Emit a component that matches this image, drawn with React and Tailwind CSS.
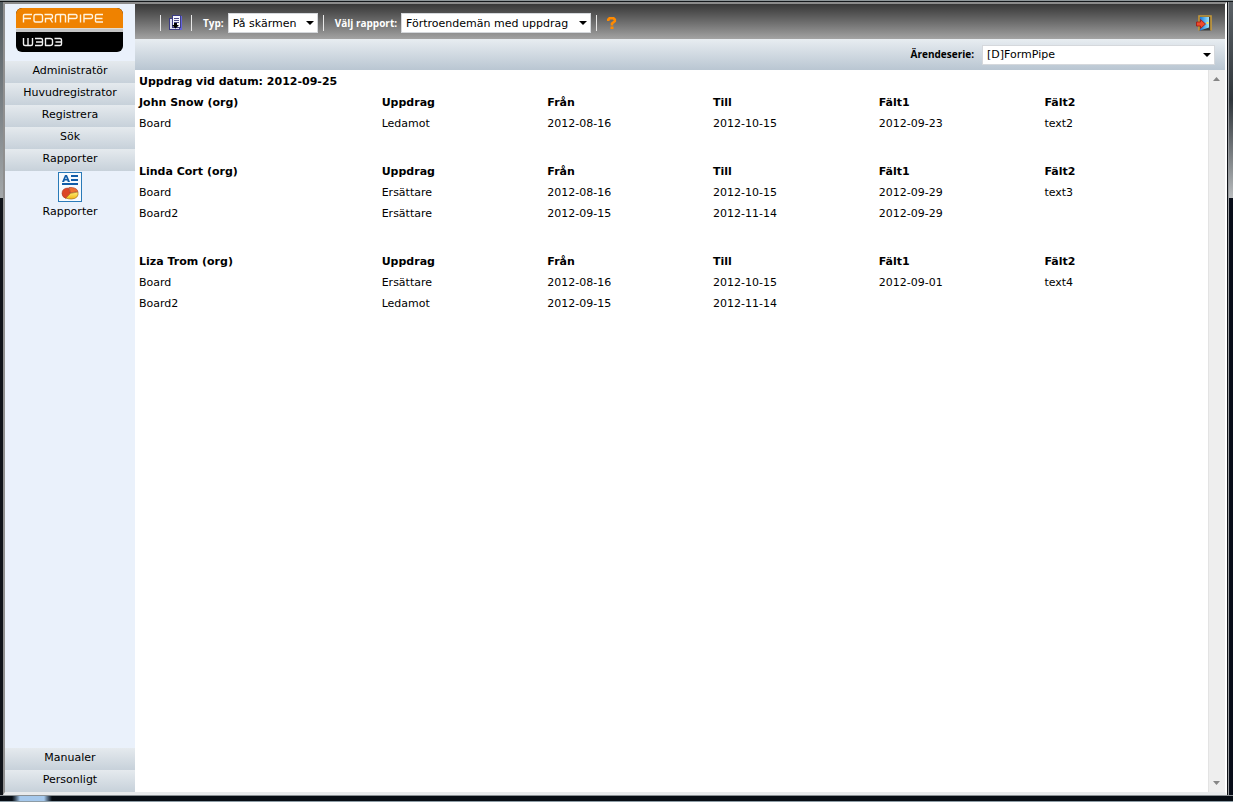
import React from "react";

const groups = [
  { name: "John Snow (org)", rows: [["Board", "Ledamot", "2012-08-16", "2012-10-15", "2012-09-23", "text2"]] },
  {
    name: "Linda Cort (org)",
    rows: [
      ["Board", "Ersättare", "2012-08-16", "2012-10-15", "2012-09-29", "text3"],
      ["Board2", "Ersättare", "2012-09-15", "2012-11-14", "2012-09-29", ""],
    ],
  },
  {
    name: "Liza Trom (org)",
    rows: [
      ["Board", "Ersättare", "2012-08-16", "2012-10-15", "2012-09-01", "text4"],
      ["Board2", "Ledamot", "2012-09-15", "2012-11-14", "", ""],
    ],
  },
];

function Logo() {
  return (
    <div className="ml-[11px] mt-1 flex h-11 w-[107px] flex-col overflow-hidden rounded-md bg-black" role="img" aria-label="Formpipe W3D3">
      <svg width="107" height="44" viewBox="0 0 107 44" fill="none">
        <rect width="107" height="20" fill="#ef8200" />
        <rect y="20" width="107" height="4" fill="#c4c4c4" />
        <rect y="20" width="107" height="1" fill="#e3dccf" />
        <g stroke="#fff3df" strokeWidth="1.4" strokeLinejoin="round">
          <path d="M7.500 14.500V7.500q0-1 1-1H16M7.500 10.500H15" />
          <path d="M19.500 6.500H25q1.500 0 1.500 1.500V12.500q0 1.500-1.500 1.500H19.500q-1.500 0-1.500-1.500V8q0-1.500 1.500-1.500z" />
          <path d="M28.500 6.500H35q1.500 0 1.500 2t-1.500 2H29.500V14.500M34 10.500l2.500 4" />
          <path d="M39.500 14.500V8q0-1.500 1.500-1.500H48q1.500 0 1.500 1.500V14.500M44.500 7V14.500" />
          <path d="M52.500 14.500V6.500H59.500q1.500 0 1.500 2t-1.500 2H53" />
          <path d="M64.500 6.500V14.500" />
          <path d="M68 14.500V6.500H75q1.500 0 1.500 2t-1.500 2H68.500" />
          <path d="M87 6.500H80.500q-1 0-1 1V13q0 1 1 1H87M79.500 10.500H86.500" />
        </g>
        <g stroke="#f1f1f1" strokeWidth="1.4" strokeLinejoin="round">
          <path d="M7.500 30V36q0 1.500 1.500 1.500H15q1.500 0 1.500-1.500V30M12 30V37" />
          <path d="M19 30.500H25q1.500 0 1.500 1.500V36q0 1.500-1.500 1.500H19M20 34H26" />
          <path d="M29.500 30.500H34q2.500 0 2.500 2V35.500q0 2-2.500 2H29.500z" />
          <path d="M38.500 30.500H44q1.500 0 1.500 1.500V36q0 1.500-1.500 1.500H38.500M39.500 34H45" />
        </g>
      </svg>
    </div>
  );
}

function ReportIcon() {
  return (
    <svg width="24" height="30" viewBox="0 0 24 30" aria-hidden="true">
      <defs>
        <linearGradient id="pie" x1="0" y1="0" x2="0" y2="1">
          <stop offset="0" stopColor="#fff27a" />
          <stop offset="1" stopColor="#f2b512" />
        </linearGradient>
      </defs>
      <rect x="0.5" y="0.5" width="23" height="29" fill="#f8fbfe" stroke="#2a7ab8" />
      <path d="M4 10 7 3h2l3 7h-2.200L9.300 8.500H6.700L6.200 10zM7.200 7h1.600L8 4.800z" fill="#125da8" fillRule="evenodd" />
      <path d="M13 3h7v2h-7zM13 7h7v2h-7zM4 11h16v2H4z" fill="#125da8" />
      <path d="M4 21.500q0-5.500 6.500-5.500l2 5.500-4.500 5q-4-1.500-4-5z" fill="#dc4528" stroke="#a83522" strokeWidth=".6" />
      <path d="M11 15.500q7.500-.500 9 4l-7.500 1.500z" fill="#ee7030" stroke="#a83522" strokeWidth=".6" />
      <path d="m12.500 21.300 7.500-1.300q1 6.500-6.500 7-3.500 0-5.500-1z" fill="url(#pie)" stroke="#a8701a" strokeWidth=".7" />
    </svg>
  );
}

function RunIcon() {
  return (
    <svg width="14" height="16" viewBox="0 0 14 16" aria-hidden="true">
      <path d="M4 1h9v14H2v-2h2z" fill="#6464dc" />
      <path d="M3 0h9v13H3z" fill="#3c3c84" />
      <path d="M4 1h7v11H4z" fill="#f4f4fc" />
      <path d="M0 3h3v10h8v2H0z" fill="#3c3c84" />
      <path d="M1 4h2v9h7v1H1z" fill="#dcdcf0" />
      <path d="M5 3.500h5M5 5.500h5M5 7.500h5" stroke="#4a4a86" />
      <path d="M5 8h3v2h2l-3.500 3.500L3 10h2z" fill="#000" />
    </svg>
  );
}

function ExitIcon() {
  return (
    <svg width="16" height="16" viewBox="0 0 16 16" aria-hidden="true">
      <defs>
        <linearGradient id="door" x1="0" y1="0" x2="1" y2="0">
          <stop offset="0" stopColor="#1478dc" />
          <stop offset="1" stopColor="#9be4ff" />
        </linearGradient>
      </defs>
      <path d="M3 15.500V1h12v14.500" fill="#3a3a3a" stroke="#c69a3a" strokeWidth="1.600" />
      <path d="M4 2h9v10.500L4 15.500z" fill="url(#door)" />
      <rect x="10.500" y="7" width="2" height="2" fill="#ffe14a" />
      <path d="M.500 7h4V4.500L9.500 9l-5 4.500V11h-4z" fill="#ef4a2d" stroke="#9d180e" strokeWidth=".8" />
    </svg>
  );
}

function HelpIcon() {
  return (
    <svg width="10" height="12" viewBox="0 0 10 12" aria-hidden="true">
      <path d="M1.300 4V2.500L2.500 1.300H6.500L7.800 2.500V4.200L5 6.500V8.500" fill="none" stroke="#ff8a00" strokeWidth="2.600" />
      <rect x="3.500" y="9.500" width="3" height="2.500" fill="#ff8a00" />
    </svg>
  );
}

function Picker({ id, value, className }) {
  return (
    <div className={"relative flex " + className}>
      <select
        id={id}
        defaultValue={value}
        className="h-5 w-full appearance-none border border-[#d5d8dc] bg-white pl-1 pr-5 text-[11px] leading-none text-black"
      >
        <option>{value}</option>
      </select>
      <svg className="pointer-events-none absolute right-1 top-2" width="8" height="4" viewBox="0 0 8 4" aria-hidden="true">
        <path d="M0 0h8L4 4z" fill="#000" />
      </svg>
    </div>
  );
}

function Divider() {
  return <span className="h-4 w-px shrink-0 bg-[#e8e8e8]" />;
}

function ToolLabel({ htmlFor, children }) {
  return (
    <label htmlFor={htmlFor} className="ml-[11px] mr-1 whitespace-nowrap font-['Open_Sans','Noto_Sans',sans-serif] text-[10px] font-bold text-white">
      {children}
    </label>
  );
}

function NavButton({ children }) {
  return (
    <button className="block h-[22px] w-full bg-linear-to-b from-[#e5eaee] to-[#c7d1da] pb-0.5 text-center leading-5">
      {children}
    </button>
  );
}

export default function App() {
  return (
    <div className="flex h-screen flex-col bg-[#070d14] font-['DejaVu_Sans',Verdana,sans-serif] text-[11px] text-black">
      <div className="h-px shrink-0 bg-[#8e9699]" />
      <div className="h-px shrink-0 bg-[#14181b]" />
      <div className="flex min-h-0 flex-1">
        <div className="flex w-[3px] shrink-0 flex-col">
          <div className="h-[196px] bg-linear-to-b from-[#50595f] to-[#a4a8aa]" />
          <div className="flex-1 bg-[#10141a]" />
        </div>
        <div className="flex min-w-0 flex-1 border-2 border-b-[3px] border-t-[#8b8b8b] border-r-white border-b-[#e8eaec] border-l-[#8f8f8f]">
          <nav className="flex w-[130px] shrink-0 flex-col bg-[#eaf1fb]">
            <Logo />
            <div className="mt-[9px]">
              <NavButton>Administratör</NavButton>
              <NavButton>Huvudregistrator</NavButton>
              <NavButton>Registrera</NavButton>
              <NavButton>Sök</NavButton>
              <NavButton>Rapporter</NavButton>
            </div>
            <a href="#rapporter" className="flex flex-col items-center gap-px pt-px">
              <ReportIcon />
              <span className="leading-[18px]">Rapporter</span>
            </a>
            <div className="mt-auto">
              <NavButton>Manualer</NavButton>
              <NavButton>Personligt</NavButton>
            </div>
          </nav>

          <div className="flex min-w-0 flex-1 flex-col">
            <header className="flex h-[35px] shrink-0 items-center bg-linear-to-b from-[#383838] to-[#a3a3a3] pl-[25px] pr-[13px] pt-[3px]">
              <Divider />
              <button className="mx-2" aria-label="Visa rapport"><RunIcon /></button>
              <Divider />
              <ToolLabel htmlFor="typ">Typ:</ToolLabel>
              <Picker id="typ" value="På skärmen" className="mr-[5px] w-[90px]" />
              <Divider />
              <ToolLabel htmlFor="rapport">Välj rapport:</ToolLabel>
              <Picker id="rapport" value="Förtroendemän med uppdrag" className="mr-[5px] w-[190px]" />
              <Divider />
              <button className="ml-2.5" aria-label="Hjälp"><HelpIcon /></button>
              <button className="ml-auto" aria-label="Logga ut"><ExitIcon /></button>
            </header>
            <div className="flex h-[31px] shrink-0 items-center justify-end gap-2 bg-linear-to-b from-[#e8edf1] to-[#b9c6d2] pr-2.5">
              <label htmlFor="serie" className="font-['Open_Sans','Noto_Sans',sans-serif] text-[10px] font-bold">Ärendeserie:</label>
              <Picker id="serie" value="[D]FormPipe" className="w-[233px]" />
            </div>

            <div className="flex min-h-0 flex-1 bg-white">
              <main className="min-w-0 flex-1 overflow-auto pl-1 pt-px">
                <h1 className="text-[11px] font-bold leading-[21px]">Uppdrag vid datum: 2012-09-25</h1>
                <table className="w-full table-fixed border-collapse text-left leading-[21px]">
                  <colgroup>
                    <col className="w-[22.7%]" />
                    <col className="w-[15.5%]" />
                    <col className="w-[15.5%]" />
                    <col className="w-[15.5%]" />
                    <col className="w-[15.5%]" />
                    <col />
                  </colgroup>
                  {groups.map((g) => (
                    <tbody key={g.name}>
                      <tr>
                        {[g.name, "Uppdrag", "Från", "Till", "Fält1", "Fält2"].map((h) => (
                          <th key={h} className="p-0 font-bold">{h}</th>
                        ))}
                      </tr>
                      {g.rows.map((r) => (
                        <tr key={r[0]} className="h-[21px]">
                          {r.map((c, i) => (
                            <td key={i} className="p-0">{c}</td>
                          ))}
                        </tr>
                      ))}
                      <tr className="h-[27px]"><td colSpan={6} className="p-0" /></tr>
                    </tbody>
                  ))}
                </table>
              </main>
              <div className="flex w-[17px] shrink-0 flex-col items-center justify-between border-l border-[#e3e3e3] bg-[#eeeeee] py-[7px] pr-px">
                <svg width="7" height="4" viewBox="0 0 7 4" aria-hidden="true"><path d="M0 4h7L3.500 0z" fill="#858585" /></svg>
                <svg width="7" height="4" viewBox="0 0 7 4" aria-hidden="true"><path d="M0 0h7L3.500 4z" fill="#858585" /></svg>
              </div>
            </div>
          </div>
        </div>
        <div className="w-px shrink-0 bg-[#101318]" />
        <div className="flex w-[5px] shrink-0 flex-col border-l border-[#9a9da0]">
          <div className="h-[196px] bg-linear-to-b from-[#5b6166] via-[#30363b] to-[#b9bcbe]" />
          <div className="flex-1 bg-[#080d18]" />
        </div>
      </div>
      <div className="h-px shrink-0 bg-[#8a9094]" />
      <div className="flex h-[6px] shrink-0 border-b border-[#8d9ca5]">
        <div className="ml-3 flex w-10">
          <div className="w-2 bg-linear-to-r from-[#070d14] to-[#a5c8ec]" />
          <div className="flex-1 bg-[#a5c8ec]" />
          <div className="w-2 bg-linear-to-r from-[#a5c8ec] to-[#070d14]" />
        </div>
      </div>
    </div>
  );
}
